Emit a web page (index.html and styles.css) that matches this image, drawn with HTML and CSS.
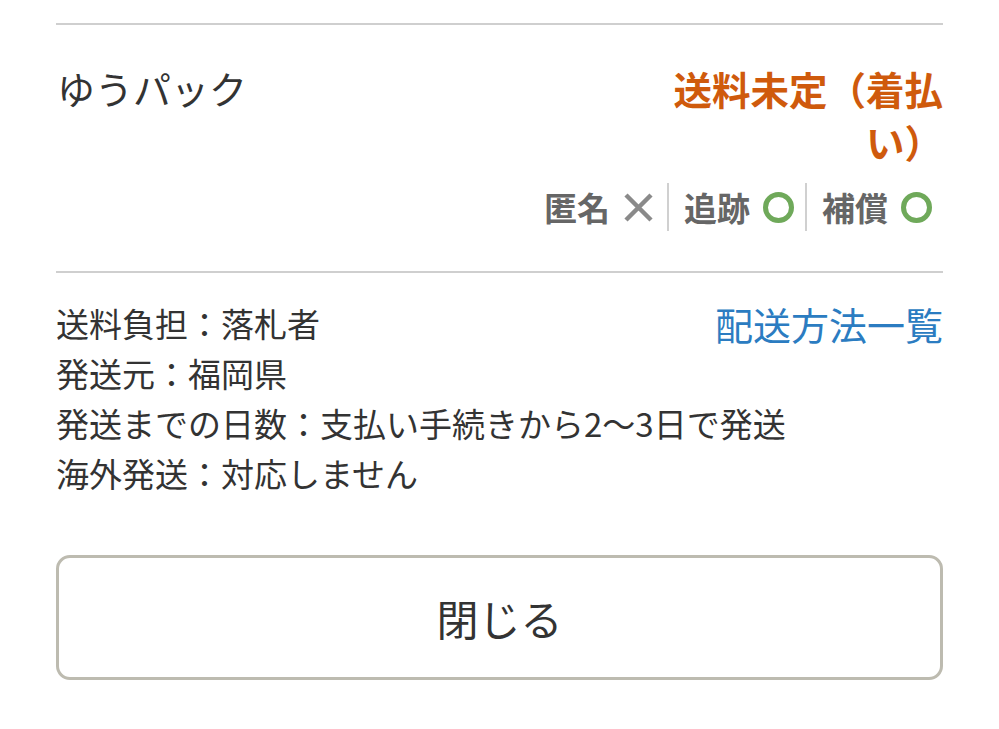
FILE: index.html
```html
<!DOCTYPE html>
<html lang="ja">
<head>
<meta charset="utf-8">
<link rel="stylesheet" href="styles.css">
</head>
<body>
<div class="page">
  <hr class="rule">
  <section class="method">
    <div class="method-head">
      <div class="method-name">ゆうパック</div>
      <div class="method-price">送料未定（着払い）</div>
    </div>
    <div class="badges">
      <div class="badge"><span class="badge-label">匿名</span>
        <svg class="icon" width="33" height="33" viewBox="0 0 33 33"><path d="M4 4 L29 29 M29 4 L4 29" stroke="#8a8a8a" stroke-width="4.5" stroke-linecap="butt"/></svg>
      </div>
      <div class="badge"><span class="badge-label">追跡</span>
        <svg class="icon" width="33" height="33" viewBox="0 0 33 33"><circle cx="16.5" cy="16.5" r="13" fill="none" stroke="#6fa95a" stroke-width="5"/></svg>
      </div>
      <div class="badge"><span class="badge-label">補償</span>
        <svg class="icon" width="33" height="33" viewBox="0 0 33 33"><circle cx="16.5" cy="16.5" r="13" fill="none" stroke="#6fa95a" stroke-width="5"/></svg>
      </div>
    </div>
  </section>
  <hr class="rule">
  <section class="info">
    <a class="info-link" href="#">配送方法一覧</a>
    <ul class="info-list">
      <li>送料負担：落札者</li>
      <li>発送元：福岡県</li>
      <li>発送までの日数：支払い手続きから2〜3日で発送</li>
      <li>海外発送：対応しません</li>
    </ul>
  </section>
  <button class="close-btn" type="button">閉じる</button>
</div>
</body>
</html>
```
FILE: styles.css
```css
html, body {
  margin: 0;
  padding: 0;
  background: #fff;
}
body {
  font-family: "Noto Sans CJK JP", "Noto Sans", sans-serif;
  color: #333;
}
.page {
  padding: 23px 56px 0 56px;
}
.rule {
  margin: 0;
  border: 0;
  height: 2px;
  background: #cfcfcf;
}
.method {
  padding: 37px 0 40px 0;
}
.method-head {
  display: flex;
  justify-content: space-between;
  align-items: flex-start;
}
.method-name {
  font-size: 38px;
  line-height: 52px;
  padding-left: 1px;
}
.method-price {
  font-size: 38.5px;
  line-height: 53px;
  font-weight: 700;
  color: #cf5a0c;
  text-align: right;
  width: 285px;
}
.badges {
  display: flex;
  justify-content: flex-end;
  margin-top: 15px;
}
.badge {
  display: flex;
  align-items: center;
  gap: 12px;
  height: 48px;
  padding: 0 10px 0 15px;
  border-left: 2px solid #d0d0d0;
}
.badge:first-child {
  border-left: 0;
  padding-right: 12px;
}
.badge-label {
  font-size: 33px;
  font-weight: 700;
  color: #666;
}
.icon {
  display: block;
}
.info {
  padding-top: 25px;
}
.info::after {
  content: "";
  display: block;
  clear: both;
}
.info-list {
  list-style: none;
  margin: 0;
  padding: 0;
  font-size: 33px;
  line-height: 50px;
}
.info-link {
  float: right;
  font-size: 38px;
  line-height: 52px;
  color: #2b7cc1;
  text-decoration: none;
  white-space: nowrap;
}
.close-btn {
  display: block;
  width: 100%;
  height: 125px;
  margin-top: 57px;
  background: #fff;
  border: 3px solid #bdbbb0;
  border-radius: 14px;
  font-family: "Noto Sans CJK JP", "Noto Sans", sans-serif;
  font-size: 42px;
  color: #333;
}
```
